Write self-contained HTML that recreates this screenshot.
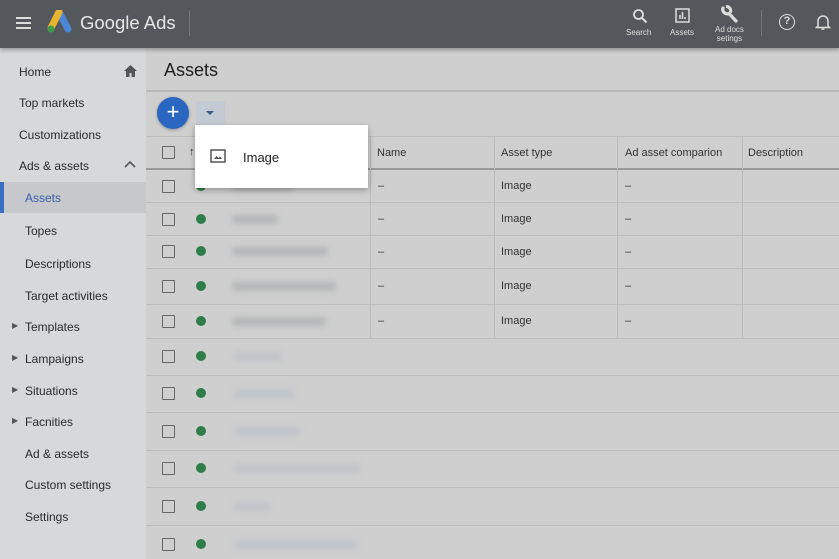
<!DOCTYPE html><html><head><style>
*{margin:0;padding:0;box-sizing:border-box}
body{width:839px;height:559px;overflow:hidden;font-family:"Liberation Sans",sans-serif;background:#cfcfcf;position:relative;color:#222}
.hdr{position:absolute;left:0;top:0;width:839px;height:48px;background:#54585c;box-shadow:0 2px 4px rgba(0,0,0,.3);z-index:3}
.side{position:absolute;left:0;top:48px;width:146px;height:511px;background:#d6d8da}
.side div{position:absolute;font-size:12px;color:#2a2a2a}
.abs{position:absolute}
.cb{position:absolute;left:162px;width:13px;height:13px;border:1.6px solid #666;border-radius:1px}
.dot{position:absolute;left:196px;width:10px;height:10px;border-radius:50%;background:#2f7d4b}
.blur{position:absolute;height:9px;background:#b4b6b8;filter:blur(3px);border-radius:4px}
.hl{position:absolute;left:146px;width:693px;height:1px;background:#bcbcbc}
.t{position:absolute;font-size:11px;color:#333}
</style></head><body>
<div class="hdr">
<div class="abs" style="left:16px;top:17px;width:15px;height:2px;background:#ddd;box-shadow:0 5px 0 #ddd,0 10px 0 #ddd"></div>
<svg class="abs" style="left:46px;top:10px" width="26" height="24" viewBox="0 0 26 24"><path d="M13 2 L22 19" stroke="#4c86d8" stroke-width="7" stroke-linecap="round"/><path d="M13 2 L5 18" stroke="#e8b62e" stroke-width="7" stroke-linecap="round"/><circle cx="5" cy="19" r="3.5" fill="#3f9c4f"/></svg>
<div class="abs" style="left:80px;top:12px;font-size:18.5px;color:#e6e6e6">Google Ads</div>
<div class="abs" style="left:189px;top:10px;width:1px;height:26px;background:#777"></div>
<svg class="abs" style="left:632px;top:8px" width="16" height="16" viewBox="0 0 16 16"><circle cx="6.5" cy="6.5" r="4.5" stroke="#ddd" stroke-width="1.8" fill="none"/><path d="M10 10l4.5 4.5" stroke="#ddd" stroke-width="2"/></svg>
<div class="abs" style="left:626px;top:28px;font-size:8px;color:#ddd">Search</div>
<svg class="abs" style="left:675px;top:8px" width="15" height="15" viewBox="0 0 15 15"><rect x="1" y="1" width="13" height="13" stroke="#ddd" stroke-width="1.5" fill="none"/><path d="M5 11V7M7.5 11V4M10 11V9" stroke="#ddd" stroke-width="1.5"/></svg>
<div class="abs" style="left:670px;top:28px;font-size:8px;color:#ddd">Assets</div>
<svg class="abs" style="left:721px;top:5px" width="18" height="19" viewBox="0 0 18 19"><path d="M2 3a4.5 4.5 0 0 0 6 5.5l7 7.5" stroke="#ddd" stroke-width="3.2" fill="none" stroke-linecap="round"/><path d="M5 1.5a4.5 4.5 0 0 1 4.5 6" stroke="#ddd" stroke-width="3" fill="none"/></svg>
<div class="abs" style="left:715px;top:25px;font-size:8px;color:#ddd;text-align:center;line-height:9px">Ad docs<br>setings</div>
<div class="abs" style="left:761px;top:10px;width:1px;height:26px;background:#777"></div>
<div class="abs" style="left:779px;top:14px;width:16px;height:16px;border:1.6px solid #ddd;border-radius:50%;color:#ddd;font-size:11px;font-weight:bold;text-align:center;line-height:13px">?</div>
<svg class="abs" style="left:815px;top:13px" width="16" height="18" viewBox="0 0 16 18"><path d="M3 13V8a5 5 0 0 1 10 0v5l1.5 1.5h-13z" stroke="#ddd" stroke-width="1.5" fill="none"/><path d="M6.5 16h3" stroke="#ddd" stroke-width="1.5"/></svg>
</div>
<div class="side">
<div style="left:19px;top:17px">Home</div>
<svg class="abs" style="left:124px;top:17px" width="13" height="12" viewBox="0 0 13 12"><path d="M6.5 0L0 6h2v6h3.5V8h2v4H11V6h2z" fill="#555"/></svg>
<div style="left:19px;top:48px">Top markets</div>
<div style="left:19px;top:80px">Customizations</div>
<div style="left:19px;top:111px">Ads &amp; assets</div>
<svg class="abs" style="left:124px;top:112px" width="12" height="8" viewBox="0 0 12 8"><path d="M1 7l5-5 5 5" stroke="#555" stroke-width="1.6" fill="none"/></svg>
<div style="left:0;top:134px;width:146px;height:31px;background:#c6c8cb"></div>
<div style="left:0;top:134px;width:4px;height:31px;background:#3b6fc4"></div>
<div style="left:25px;top:143px;color:#3a5fb0">Assets</div>
<div style="left:25px;top:176px">Topes</div>
<div style="left:25px;top:209px">Descriptions</div>
<div style="left:25px;top:241px">Target activities</div>
<div style="left:12px;top:273px;font-size:8px;color:#555">▶</div><div style="left:25px;top:272px">Templates</div>
<div style="left:12px;top:305px;font-size:8px;color:#555">▶</div><div style="left:25px;top:304px">Lampaigns</div>
<div style="left:12px;top:337px;font-size:8px;color:#555">▶</div><div style="left:25px;top:336px">Situations</div>
<div style="left:12px;top:368px;font-size:8px;color:#555">▶</div><div style="left:25px;top:367px">Facnities</div>
<div style="left:25px;top:399px">Ad &amp; assets</div>
<div style="left:25px;top:430px">Custom settings</div>
<div style="left:25px;top:462px">Settings</div>
</div>
<div class="abs" style="left:164px;top:60px;font-size:18px;color:#1e1e1e">Assets</div>
<div class="abs" style="left:146px;top:90px;width:693px;height:2px;background:#b8b8b8"></div>
<div class="abs" style="left:157px;top:97px;width:32px;height:32px;border-radius:50%;background:#2b66c0;color:#fff;font-size:22px;text-align:center;line-height:30px;box-shadow:0 1px 3px rgba(0,0,0,.3)">+</div>
<div class="abs" style="left:196px;top:101px;width:29px;height:24px;background:#c4cad3"></div>
<div class="abs" style="left:206px;top:111px;border-left:4px solid transparent;border-right:4px solid transparent;border-top:4px solid #3b5b90"></div>
<div class="hl" style="top:136px"></div>
<div class="abs" style="left:146px;top:168px;width:693px;height:2px;background:#9a9a9a"></div>
<div class="cb" style="top:146px"></div>
<div class="t" style="left:189px;top:146px">↑</div>
<div class="t" style="left:377px;top:147px">Name</div>
<div class="t" style="left:501px;top:147px">Asset type</div>
<div class="t" style="left:625px;top:147px">Ad asset comparion</div>
<div class="t" style="left:748px;top:147px">Description</div>
<div class="abs" style="left:370px;top:136px;width:1px;height:202px;background:#bcbcbc"></div>
<div class="abs" style="left:494px;top:136px;width:1px;height:202px;background:#bcbcbc"></div>
<div class="abs" style="left:617px;top:136px;width:1px;height:202px;background:#bcbcbc"></div>
<div class="abs" style="left:742px;top:136px;width:1px;height:202px;background:#bcbcbc"></div>
<div class="hl" style="top:202px"></div><div class="hl" style="top:235px"></div><div class="hl" style="top:268px"></div><div class="hl" style="top:304px"></div><div class="hl" style="top:338px"></div><div class="hl" style="top:375px"></div><div class="hl" style="top:412px"></div><div class="hl" style="top:450px"></div><div class="hl" style="top:487px"></div><div class="hl" style="top:525px"></div>
<div class="cb" style="top:180px"></div><div class="dot" style="top:181px"></div><div class="blur" style="left:232px;top:182px;width:60px"></div><div class="t" style="left:378px;top:180px">–</div><div class="t" style="left:501px;top:180px">Image</div><div class="t" style="left:625px;top:180px">–</div>
<div class="cb" style="top:213px"></div><div class="dot" style="top:214px"></div><div class="blur" style="left:232px;top:215px;width:46px"></div><div class="t" style="left:378px;top:213px">–</div><div class="t" style="left:501px;top:213px">Image</div><div class="t" style="left:625px;top:213px">–</div>
<div class="cb" style="top:245px"></div><div class="dot" style="top:246px"></div><div class="blur" style="left:232px;top:247px;width:96px"></div><div class="t" style="left:378px;top:246px">–</div><div class="t" style="left:501px;top:246px">Image</div><div class="t" style="left:625px;top:246px">–</div>
<div class="cb" style="top:280px"></div><div class="dot" style="top:281px"></div><div class="blur" style="left:232px;top:282px;width:104px"></div><div class="t" style="left:378px;top:280px">–</div><div class="t" style="left:501px;top:280px">Image</div><div class="t" style="left:625px;top:280px">–</div>
<div class="cb" style="top:315px"></div><div class="dot" style="top:316px"></div><div class="blur" style="left:232px;top:317px;width:94px"></div><div class="t" style="left:378px;top:315px">–</div><div class="t" style="left:501px;top:315px">Image</div><div class="t" style="left:625px;top:315px">–</div>
<div class="cb" style="top:350px"></div><div class="dot" style="top:351px"></div><div class="blur" style="left:234px;top:352px;width:48px;background:#bfc3c8"></div>
<div class="cb" style="top:387px"></div><div class="dot" style="top:388px"></div><div class="blur" style="left:234px;top:389px;width:60px;background:#bfc3c8"></div>
<div class="cb" style="top:425px"></div><div class="dot" style="top:426px"></div><div class="blur" style="left:234px;top:427px;width:66px;background:#bfc3c8"></div>
<div class="cb" style="top:462px"></div><div class="dot" style="top:463px"></div><div class="blur" style="left:234px;top:464px;width:126px;background:#bfc3c8"></div>
<div class="cb" style="top:500px"></div><div class="dot" style="top:501px"></div><div class="blur" style="left:234px;top:502px;width:36px;background:#bfc3c8"></div>
<div class="cb" style="top:538px"></div><div class="dot" style="top:539px"></div><div class="blur" style="left:234px;top:540px;width:124px;background:#bfc3c8"></div>
<div class="abs" style="left:195px;top:125px;width:173px;height:63px;background:#fff;box-shadow:0 2px 6px rgba(0,0,0,.3);z-index:2">
<svg class="abs" style="left:15px;top:24px" width="16" height="14" viewBox="0 0 16 14"><rect x="1" y="1" width="14" height="12" stroke="#555" stroke-width="1.5" fill="none"/><path d="M4 10l2.5-3 2 2 1.5-1.5 2 2.5z" fill="#555"/></svg>
<div class="abs" style="left:48px;top:25px;font-size:13px;color:#222">Image</div>
</div>
</body></html>
